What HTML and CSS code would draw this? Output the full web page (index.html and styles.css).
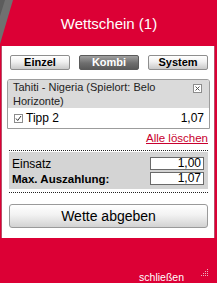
FILE: index.html
```html
<!DOCTYPE html>
<html lang="de">
<head>
<meta charset="utf-8">
<title>Wettschein</title>
<link rel="stylesheet" href="styles.css">
</head>
<body>
<div class="window">
  <svg class="deco" width="16" height="48" viewBox="0 0 16 48"><polygon points="0,0 13,0 0,44" fill="#707070"/><polygon points="0,0 5,0 0,16" fill="#5c5c5c"/></svg>
  <div class="title">Wettschein (1)</div>
  <div class="panel">
    <div class="tabs">
      <div class="tab">Einzel</div>
      <div class="tab active">Kombi</div>
      <div class="tab">System</div>
    </div>
    <div class="bet">
      <div class="bet-head">
        <div class="bet-name">Tahiti - Nigeria (Spielort: Belo Horizonte)</div>
        <div class="close"><svg width="9" height="9" viewBox="0 0 9 9"><rect x="0.5" y="0.5" width="8" height="8" fill="#fff" stroke="#8c8c8c"/><path d="M2.5 2.5 L6.5 6.5 M6.5 2.5 L2.5 6.5" stroke="#555" stroke-width="1"/></svg></div>
      </div>
      <div class="bet-row">
        <div class="tipp"><span class="check"><svg width="9" height="9" viewBox="0 0 9 9"><rect x="0.5" y="0.5" width="8" height="8" fill="#fff" stroke="#8c8c8c"/><path d="M2 4.5 L3.7 6.5 L7 2" stroke="#333" stroke-width="1" fill="none"/></svg></span>Tipp 2</div>
        <div class="quote">1,07</div>
      </div>
    </div>
    <div class="clear"><a href="#">Alle löschen</a></div>
    <div class="dots"></div>
    <div class="sums">
      <div class="sum-row"><span>Einsatz</span><span class="field">1,00</span></div>
      <div class="sum-row strong"><span>Max. Auszahlung:</span><span class="field">1,07</span></div>
    </div>
    <div class="dots bottom"></div>
    <div class="submit">Wette abgeben</div>
  </div>
  <div class="footer">
    <span class="close-link">schließen</span>
    <svg class="grip" width="10" height="10" viewBox="0 0 10 10" fill="#eab4c0">
      <rect x="8" y="0" width="1" height="1"/>
      <rect x="6" y="2" width="1" height="1"/><rect x="8" y="2" width="1" height="1"/>
      <rect x="4" y="4" width="1" height="1"/><rect x="6" y="4" width="1" height="1"/><rect x="8" y="4" width="1" height="1"/>
      <rect x="2" y="6" width="1" height="1"/><rect x="4" y="6" width="1" height="1"/><rect x="6" y="6" width="1" height="1"/><rect x="8" y="6" width="1" height="1"/>
    </svg>
  </div>
</div>
</body>
</html>
```
FILE: styles.css
```css
html, body {
  margin: 0;
  padding: 0;
}
body {
  background: #dc0035;
  font-family: "Liberation Sans", Arial, sans-serif;
  color: #000;
}
.window {
  position: relative;
  width: 217px;
  height: 283px;
  overflow: hidden;
  background: #dc0035;
}
.deco {
  position: absolute;
  left: 0;
  top: 0;
}
.title {
  height: 46px;
  display: flex;
  align-items: center;
  justify-content: center;
  color: #fff;
  font-size: 15px;
  padding-left: 1px;
}
.panel {
  margin-left: 1px;
  width: 199px;
  background: #fff;
  border-left: 1px solid #b8506a;
  border-right: 1px solid #b8506a;
  padding: 9px 6px 10px 7px;
}
.tabs {
  display: flex;
  gap: 9px;
  padding-left: 1px;
}
.tab {
  width: 58px;
  height: 13px;
  border: 1px solid #8e8e8e;
  border-radius: 2px;
  background: linear-gradient(#ffffff, #f0f0f0 45%, #c9c9c9);
  font-size: 11px;
  font-weight: bold;
  line-height: 13px;
  text-align: center;
}
.tab.active {
  background: linear-gradient(#a0a0a0, #6e6e6e 55%, #5a5a5a);
  border-color: #5a5a5a;
  color: #fff;
}
.bet {
  margin: 9px -2px 0 -2px;
  border: 1px solid #9c9c9c;
  border-radius: 3px 3px 0 0;
  font-size: 12px;
}
.bet-head {
  display: flex;
  align-items: flex-start;
  background: #dadada;
  padding: 0 7px 0 5px;
  font-size: 11px;
  line-height: 14px;
  border-radius: 2px 2px 0 0;
}
.bet-name {
  flex: 1;
  color: #222;
}
.close {
  margin-top: 4px;
  margin-left: 4px;
  height: 9px;
}
.close svg, .check svg {
  display: block;
}
.bet-row {
  height: 20px;
  display: flex;
  align-items: center;
  justify-content: space-between;
  padding: 0 5px 0 6px;
}
.tipp {
  display: flex;
  align-items: center;
}
.check {
  margin-right: 3px;
}
.clear {
  text-align: right;
  font-size: 11.5px;
  line-height: 13px;
  margin-top: 3px;
}
.clear a {
  color: #c8002e;
  text-decoration: underline;
}
.dots {
  border-top: 1px dotted #222;
  margin-top: 5px;
}
.dots.bottom {
  margin-top: 3px;
}
.sums {
  margin-top: 1px;
  background: #d4d4d4;
  padding: 5px 4px 4px 3px;
  display: flex;
  flex-direction: column;
  gap: 2px;
  font-size: 12px;
}
.sum-row {
  display: flex;
  justify-content: space-between;
  align-items: center;
  height: 13px;
}
.sum-row.strong {
  font-weight: bold;
  font-size: 11.5px;
}
.field {
  width: 50px;
  height: 11px;
  border: 1px solid #6a6a6a;
  background: #fff;
  text-align: right;
  padding-right: 2px;
  font-weight: normal;
  font-size: 12px;
  line-height: 11px;
}
.submit {
  margin-top: 11px;
  height: 22px;
  border: 1px solid #9a9a9a;
  border-radius: 3px;
  background: linear-gradient(#ffffff, #f2f2f2 45%, #d2d2d2);
  font-size: 14px;
  line-height: 22px;
  text-align: center;
}
.footer {
  height: 44px;
  display: flex;
  justify-content: flex-end;
  align-items: flex-end;
  padding-right: 8px;
  gap: 15px;
}
.close-link {
  color: #fff;
  font-size: 10.5px;
  line-height: 12px;
  margin-bottom: -1px;
}
.grip {
  margin-bottom: 3px;
}
```
